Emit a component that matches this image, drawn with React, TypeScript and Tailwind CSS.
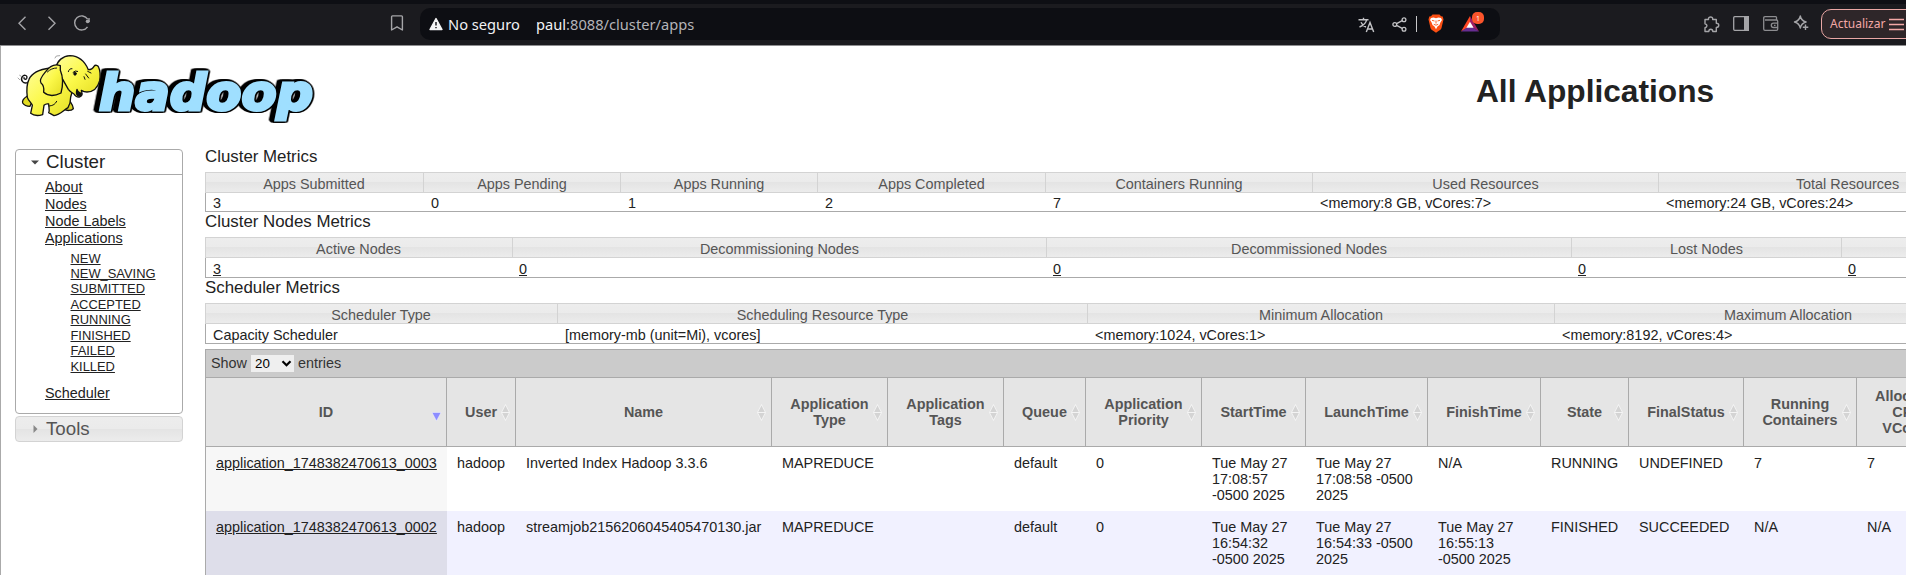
import React from "react";

type Cell = { head: string; value: string; w: string; link?: boolean };

const clusterMetrics: Cell[] = [
  { head: "Apps Submitted", value: "3", w: "w-[219px]" },
  { head: "Apps Pending", value: "0", w: "w-[197px]" },
  { head: "Apps Running", value: "1", w: "w-[197px]" },
  { head: "Apps Completed", value: "2", w: "w-[228px]" },
  { head: "Containers Running", value: "7", w: "w-[267px]" },
  { head: "Used Resources", value: "<memory:8 GB, vCores:7>", w: "w-[346px]" },
  { head: "Total Resources", value: "<memory:24 GB, vCores:24>", w: "w-[378px]" },
];

const nodeMetrics: Cell[] = [
  { head: "Active Nodes", value: "3", w: "w-[308px]", link: true },
  { head: "Decommissioning Nodes", value: "0", w: "w-[534px]", link: true },
  { head: "Decommissioned Nodes", value: "0", w: "w-[525px]", link: true },
  { head: "Lost Nodes", value: "0", w: "w-[270px]", link: true },
  { head: "", value: "0", w: "w-[258px]", link: true },
];

const schedulerMetrics: Cell[] = [
  { head: "Scheduler Type", value: "Capacity Scheduler", w: "w-[353px]" },
  { head: "Scheduling Resource Type", value: "[memory-mb (unit=Mi), vcores]", w: "w-[530px]" },
  { head: "Minimum Allocation", value: "<memory:1024, vCores:1>", w: "w-[467px]" },
  { head: "Maximum Allocation", value: "<memory:8192, vCores:4>", w: "w-[467px]" },
];

const columns: { lines: string[]; w: string }[] = [
  { lines: ["ID"], w: "w-[241px]" },
  { lines: ["User"], w: "w-[69px]" },
  { lines: ["Name"], w: "w-[256px]" },
  { lines: ["Application", "Type"], w: "w-[116px]" },
  { lines: ["Application", "Tags"], w: "w-[116px]" },
  { lines: ["Queue"], w: "w-[82px]" },
  { lines: ["Application", "Priority"], w: "w-[116px]" },
  { lines: ["StartTime"], w: "w-[104px]" },
  { lines: ["LaunchTime"], w: "w-[122px]" },
  { lines: ["FinishTime"], w: "w-[113px]" },
  { lines: ["State"], w: "w-[88px]" },
  { lines: ["FinalStatus"], w: "w-[115px]" },
  { lines: ["Running", "Containers"], w: "w-[113px]" },
  { lines: ["Allocated", "CPU", "VCores"], w: "w-[102px]" },
];

const apps: string[][][] = [
  [
    ["application_1748382470613_0003"],
    ["hadoop"],
    ["Inverted Index Hadoop 3.3.6"],
    ["MAPREDUCE"],
    [],
    ["default"],
    ["0"],
    ["Tue May 27", "17:08:57", "-0500 2025"],
    ["Tue May 27", "17:08:58 -0500", "2025"],
    ["N/A"],
    ["RUNNING"],
    ["UNDEFINED"],
    ["7"],
    ["7"],
  ],
  [
    ["application_1748382470613_0002"],
    ["hadoop"],
    ["streamjob2156206045405470130.jar"],
    ["MAPREDUCE"],
    [],
    ["default"],
    ["0"],
    ["Tue May 27", "16:54:32", "-0500 2025"],
    ["Tue May 27", "16:54:33 -0500", "2025"],
    ["Tue May 27", "16:55:13", "-0500 2025"],
    ["FINISHED"],
    ["SUCCEEDED"],
    ["N/A"],
    ["N/A"],
  ],
];

const states = ["NEW", "NEW_SAVING", "SUBMITTED", "ACCEPTED", "RUNNING", "FINISHED", "FAILED", "KILLED"];

function Toolbar() {
  return (
    <header className="flex h-[46px] shrink-0 items-start overflow-hidden border-t-4 border-b border-t-[#0e0f14] border-b-[#8e8e90] bg-[#1b1b1f] font-['Noto_Sans',sans-serif] [&>*]:shrink-0">
      <svg className="mt-3 ml-[17px] h-[15px] w-[10px]" viewBox="0 0 10 15" fill="none" stroke="#a5a5a8" strokeWidth="1.4">
        <path d="M8.5 .7 2 7.2l6.500 6.500" />
      </svg>
      <svg className="mt-3 ml-[20px] h-[15px] w-[10px]" viewBox="0 0 10 15" fill="none" stroke="#a5a5a8" strokeWidth="1.4">
        <path d="M1.500 .7 8 7.2l-6.500 6.500" />
      </svg>
      <svg className="mt-[10px] ml-[16px] h-[18px] w-[18px]" viewBox="0 0 18 18" fill="none" stroke="#a5a5a8" strokeWidth="1.4">
        <path d="M14.500 12.800A7 7 0 1 1 14.600 5.200" />
        <circle cx="14.700" cy="7.300" r="1.900" fill="#a5a5a8" stroke="none" />
        <path d="M16 4v4" />
      </svg>
      <svg className="mt-[11px] ml-[299px] h-[17px] w-[14px]" viewBox="0 0 14 17" fill="none" stroke="#a5a5a8" strokeWidth="1.4">
        <path d="M2.500 .9h9q.9 0 .9.900v13.200L7 11.800 1.600 15V1.800q0-.9.9-.9z" strokeLinejoin="round" />
      </svg>
      <div className="mt-1 ml-[16px] flex h-8 w-[1080px] items-start rounded-[10px] bg-[#0d0e13]">
        <svg className="mt-[9px] ml-[9px] h-[14px] w-[14px]" viewBox="0 0 14 14">
          <path d="M7 1.500 13 12.500H1z" fill="#f4f4f5" stroke="#f4f4f5" strokeWidth="1.400" strokeLinejoin="round" />
          <path d="M7 5v3.600M7 9.900v1.400" stroke="#0d0e13" strokeWidth="1.400" />
        </svg>
        <span className="ml-[5px] w-[88px] text-[14.670px] leading-8 whitespace-nowrap text-[#f2f2f4]">No seguro</span>
        <span className="text-[14.670px] leading-8 whitespace-nowrap text-[#b4b4b8]">
          <span className="text-[#f2f2f4]">paul</span>:8088/cluster/apps
        </span>
        <div className="ml-auto flex items-start pr-[15px]">
          <svg className="mt-[9px] h-[16px] w-[17px]" viewBox="0 0 17 16" fill="none" stroke="#c3c3c6" strokeWidth="1.400">
            <path d="M.5 2.700h10M5.500.7v2M8.600 2.900C8 6 4.500 8.800 1.500 10M3 5.200C4 7.500 6 9.300 8 10M8.300 15l3.700-9.500L15.700 15M9.500 12h5" />
          </svg>
          <svg className="mt-[9px] ml-[17px] h-[15px] w-[15px]" viewBox="0 0 15 15" fill="none" stroke="#c3c3c6" strokeWidth="1.300">
            <circle cx="2.800" cy="7.500" r="1.900" />
            <circle cx="12" cy="2.800" r="1.900" />
            <circle cx="12" cy="12.200" r="1.900" />
            <path d="m4.600 6.600 5.600-2.900M4.600 8.400l5.600 2.900" />
          </svg>
          <div className="mt-2 ml-[9px] h-4 w-px bg-[#c8c8ca]" />
          <svg className="mt-[6px] ml-[11px] h-[19px] w-[16px]" viewBox="0 0 16 19">
            <path d="M4.500.5h7l1.500 1.700 1.700.2.800 3-2 8.600q-.4 1.300-1.500 2.100L8 18.700l-4-2.600q-1.100-.8-1.500-2.100L.5 5.400l.8-3L3 2.200z" fill="#fb4f13" />
            <path d="m3 4 2.500-.5L8 4.200l2.500-.7L13 4l1 2-1.600 2.600-.9 2.500-2 1.300L8 15.300l-1.500-2.900-2-1.300-.9-2.500L2 6z" fill="#fff" />
            <path d="m4 6.300 2.500.7M12 6.300 9.500 7M8 6.500v3M5.800 10.300 8 11.200l2.200-.9" stroke="#fb4f13" strokeWidth=".9" fill="none" />
          </svg>
          <div className="relative mt-1 ml-[17px] h-6 w-[24px]">
            <svg className="mt-[4px] h-[16px] w-[18px]" viewBox="0 0 18 17" preserveAspectRatio="none">
              <path d="M9 0 0 16.500l9-5.500z" fill="#ff4724" />
              <path d="M9 0l9 16.500L9 11z" fill="#9e1f63" />
              <path d="M0 16.500h18L9 10z" fill="#662d91" />
              <path d="m9 6 3.600 6.500H5.400z" fill="#fff" />
            </svg>
            <span className="absolute top-0 left-[11px] flex h-[12px] w-[12px] items-center justify-center rounded-[5px] bg-[#fb542b] text-[7px] leading-none text-white">
              1
            </span>
          </div>
        </div>
      </div>
      <svg className="mt-[12px] ml-[203px] h-[17px] w-[17px]" viewBox="0 0 17 17" fill="none" stroke="#a5a5a8" strokeWidth="1.400" strokeLinejoin="round">
        <path d="M2 3.500h3.500c-.5-3.400 4.700-3.400 4.200 0h3.600v3.700c3.300 0 3.300 4.300 0 4.300V15.500H9.800c0-3-4-3-4 0H2v-3.700c2.600-.3 2.600-3.600 0-4z" />
      </svg>
      <svg className="mt-[12px] ml-[13px] h-[15px] w-[16px]" viewBox="0 0 16 15">
        <rect x=".7" y=".7" width="14.600" height="13.600" rx="1" fill="none" stroke="#a5a5a8" strokeWidth="1.300" />
        <path d="M11 0h5v15h-5z" fill="#a5a5a8" />
      </svg>
      <svg className="mt-[12px] ml-[14px] h-[15px] w-[16px]" viewBox="0 0 16 15" fill="none" stroke="#8d8d90" strokeWidth="1.300">
        <path d="M13.500 4V1.500q0-.8-.8-.8H2q-1.300 0-1.300 1.300v11q0 1.300 1.300 1.300h11.500q1.200 0 1.200-1.200V5.200q0-1.200-1.200-1.200H2M14.700 11.500H10.500q-2.200 0-2.200-2.200t2.200-2.200h4.200M11 9.300h1.500" />
      </svg>
      <svg className="mt-[11px] ml-[14px] h-[17px] w-[17px]" viewBox="0 0 17 17" fill="none" stroke="#a5a5a8" strokeWidth="1.400" strokeLinejoin="round">
        <path d="M7.300 1q1 4.800 5.800 6Q8.300 8.200 7.300 13 6.300 8.200 1.500 7 6.300 5.800 7.300 1zM12.500 9.500v5.500M9.800 12.300h5.500" />
      </svg>
      <div className="mt-[5px] ml-[11px] flex h-[30px] w-[100px] shrink-0 items-center rounded-l-[10px] border border-[#eaa7a5] bg-[#2e2629]">
        <span className="ml-[8px] w-[59px] text-[12px] leading-none whitespace-nowrap text-[#f3a8a6]">Actualizar</span>
        <svg className="h-[13px] w-[15px] shrink-0" viewBox="0 0 15 13" stroke="#f3a8a6" strokeWidth="1.300">
          <path d="M0 1.500h15M0 6.500h15M0 11.500h15" />
        </svg>
      </div>
    </header>
  );
}

function HadoopLogo() {
  return (
    <svg className="h-[76px] w-[304px]" viewBox="48 156 912 228">
      <defs>
        <linearGradient id="skin" x1="0" y1="0" x2="1" y2="1">
          <stop offset="0" stopColor="#fffe9a" />
          <stop offset=".5" stopColor="#fbf849" />
          <stop offset="1" stopColor="#e3dc22" />
        </linearGradient>
      </defs>
      <text
        x="297"
        y="331"
        textLength="642"
        lengthAdjust="spacingAndGlyphs"
        className="fill-[#9fdfff] stroke-[#9fdfff] [stroke-width:9px] [stroke-linejoin:miter] [filter:drop-shadow(3px_3px_0_#000)_drop-shadow(-3px_-3px_0_#000)_drop-shadow(2px_-2px_0_#000)_drop-shadow(-6px_0_0_#000)_drop-shadow(-7px_0_0_#000)] font-['DejaVu_Sans',sans-serif] text-[147px] font-bold italic"
      >
        hadoop
      </text>
      <g stroke="#111" strokeWidth="4" strokeLinejoin="round" strokeLinecap="round">
        <path d="M84 247C70 254 60 240 67 230c6-8 17-3 13 5-3 5-9 2-8-2" fill="none" />
        <path d="M82 288c-8 5-16 14-14 21 5 8 14 10 22 10l8-18z" fill="#e3dc22" />
        <path d="M205 296c6 10 14 18 15 30-7 7-20 7-28 1z" fill="#d8d020" />
        <path d="M150 204c-30 4-54 14-63 34-9 18-7 38-5 54 3 10 12 16 15 24l-5 24c10 8 26 7 36 4l4-28c4-4 10-5 14-4 0 10 4 20 0 26l16 9c18-2 28-16 42-24 6-10 8-20 8-32l10-34-40-50z" fill="url(#skin)" />
        <path d="M168 202c4-20 20-34 42-35 26 1 44 16 55 42 8 0 14-4 17-10 4-6 12-3 14 3 6 14 5 28 3 40-6 22-20 34-38 34-6 0-12-2-17-5 2 10 6 16-6 20-8 1-12-2-16-9-6-3-12-7-17-14z" fill="url(#skin)" />
        <path d="M231 268c2 8 6 10 14 12-2 6-4 9-10 8-6-3-7-10-4-20z" fill="#111" />
        <path d="M181 197c-18-7-34 4-44 18-12 14-20 26-14 34 8 6 10 14 8 28 16 14 34 11 52 2 6-22 8-44-2-68z" fill="url(#skin)" />
        <path d="M142 216c8-8 18-12 28-12M205 215c2-7 6-10 11-9M219 217q7-7 14-3M257 222l9 12M263 214l10 5M252 230l3 8M148 318c12-1 18-6 22-14" fill="none" strokeWidth="3" />
        <ellipse cx="225" cy="221" rx="4" ry="5" fill="#111" strokeWidth="2" />
        <path d="M54 234l5 5M59 226l5 3M165 174l4-6 10-1" fill="none" stroke="#777" strokeWidth="2" />
      </g>
    </svg>
  );
}

function Sidebar() {
  return (
    <nav className="flex w-[168px] shrink-0 flex-col">
      <section className="h-[265px] rounded-[4px] border border-[#aaaaaa]">
        <h3 className="flex h-[25px] items-center border-b border-[#aaaaaa] text-[18.720px] leading-6">
          <svg className="ml-[15px] h-[5px] w-[8px]" viewBox="0 0 8 5"><path d="M0 .5h8L4 4.500z" fill="#454545" /></svg>
          <span className="ml-[7px]">Cluster</span>
        </h3>
        <ul className="pt-[4px] pl-[29px] leading-[17px] underline">
          <li>About</li>
          <li>Nodes</li>
          <li>Node Labels</li>
          <li>Applications</li>
        </ul>
        <ul className="pt-[3.600px] pl-[54.500px] text-[12.900px] leading-[15.440px] underline">
          {states.map((s) => (
            <li key={s}>{s}</li>
          ))}
        </ul>
        <div className="pt-[11px] pl-[29px] leading-[17px] underline">Scheduler</div>
      </section>
      <h3 className="mt-[2px] flex h-[26px] items-center rounded-[4px] border border-[#d3d3d3] bg-[linear-gradient(#ededed,#ebebeb_50%,#e4e4e4_50%,#ececec)] text-[18.720px] leading-6 text-[#555555]">
        <svg className="ml-[17px] h-[8px] w-[5px]" viewBox="0 0 5 8"><path d="M.5 0v8l4-4z" fill="#888888" /></svg>
        <span className="ml-[8px]">Tools</span>
      </h3>
    </nav>
  );
}

function MetricsTable({ title, cells, row }: { title: string; cells: Cell[]; row: string }) {
  return (
    <section className="flex shrink-0 flex-col">
      <h3 className="h-[25px] text-[16.850px] leading-5">{title}</h3>
      <div className="flex h-[21px] border-y border-l border-[#d3d3d3] bg-[linear-gradient(#ededed,#ebebeb_50%,#e4e4e4_50%,#ececec)] text-[#555555]">
        {cells.map((c, i) => (
          <div key={i} className={`${c.w} h-[19px] shrink-0 border-r border-[#d3d3d3] text-center leading-[22px] whitespace-nowrap first:-ml-px`}>
            {c.head}
          </div>
        ))}
      </div>
      <div className={`${row} flex items-start border-b border-l border-[#aaaaaa]`}>
        {cells.map((c, i) => (
          <div key={i} className={`${c.w} shrink-0 ${c.link ? "pl-[6px]" : "pl-[7px]"} leading-[17px] whitespace-nowrap first:-ml-px first:pl-2`}>
            <span className={c.link ? "underline" : ""}>{c.value}</span>
          </div>
        ))}
      </div>
    </section>
  );
}

function SortIcon({ active }: { active: boolean }) {
  return (
    <svg className="absolute top-1/2 right-0 -mt-[9px] h-[19px] w-[19px]" viewBox="0 0 19 19">
      {active ? (
        <path d="M5 9.500h9L9.500 18z" fill="#8d8dff" stroke="#f4f4ff" strokeWidth=".5" />
      ) : (
        <g>
          <path d="M5 9.500 9.500.8 14 9.500 9.500 18.200z" fill="#f4f4f4" />
          <path d="M6.200 9 9.500 2.500 12.800 9zM6.200 10h6.600L9.500 16.500z" fill="#d4d4d4" />
        </g>
      )}
    </svg>
  );
}

function AppsTable() {
  return (
    <section className="mt-[5px] flex h-[226px] shrink-0 flex-col border-t border-l border-[#aaaaaa]">
      <div className="flex h-[27px] items-start bg-[#cbcbcb] pl-[5px] text-[#333333]">
        <span className="w-[40px] leading-[27px]">Show</span>
        <div className="mt-[5px] flex h-[17px] w-[43px] items-center bg-[#efefef] text-[13.330px] leading-none text-black">
          <span className="ml-[4px]">20</span>
          <svg className="ml-[11px] h-[7px] w-[11px]" viewBox="0 0 11 7">
            <path d="m1.500 1.200 4 4 4-4" fill="none" stroke="#000" strokeWidth="2.200" />
          </svg>
        </div>
        <span className="ml-[4px] leading-[27px]">entries</span>
      </div>
      <div className="flex h-[70px] border-y border-[#aaaaaa] bg-[#e5e5e5] font-bold text-[#555555]">
        {columns.map((c, i) => (
          <div key={i} className={`${c.w} relative flex shrink-0 flex-col items-center justify-center border-r border-[#aaaaaa] leading-4`}>
            {c.lines.map((l) => (
              <span key={l}>{l}</span>
            ))}
            <SortIcon active={i === 0} />
          </div>
        ))}
      </div>
      {apps.map((row, r) => (
        <div key={r} className={`flex h-16 ${r === 1 ? "bg-[#f1f1ff]" : "bg-white"}`}>
          {row.map((lines, i) => (
            <div
              key={i}
              className={`${columns[i].w} flex shrink-0 flex-col pt-2 pl-[10px] leading-4 whitespace-nowrap ${
                i === 0 ? (r === 1 ? "bg-[#dedeea] underline" : "bg-[#f7f7f7] underline") : ""
              }`}
            >
              {lines.map((l) => (
                <span key={l}>{l}</span>
              ))}
            </div>
          ))}
        </div>
      ))}
    </section>
  );
}

export default function App() {
  return (
    <div className="flex h-[575px] w-[1906px] flex-col overflow-hidden bg-white font-['Liberation_Sans',Arial,sans-serif] text-[14.400px] text-[#222222]">
      <Toolbar />
      <div className="flex flex-1 flex-col overflow-hidden border-l border-[#aaaaaa]">
        <div className="flex h-[103px] shrink-0 items-start pt-[6px] pl-[15px]">
          <HadoopLogo />
          <h1 className="mt-[19px] ml-[1156px] text-[31.680px] leading-[40px] font-bold whitespace-nowrap">All Applications</h1>
        </div>
        <div className="flex pl-[14px]">
          <Sidebar />
          <main className="-mt-[2px] ml-[22px] flex min-w-0 flex-1 flex-col overflow-hidden">
            <MetricsTable title="Cluster Metrics" cells={clusterMetrics} row="h-[19px] pt-[2px]" />
            <MetricsTable title="Cluster Nodes Metrics" cells={nodeMetrics} row="h-[20px] pt-[3px]" />
            <MetricsTable title="Scheduler Metrics" cells={schedulerMetrics} row="h-[20px] pt-[3px]" />
            <AppsTable />
          </main>
        </div>
      </div>
    </div>
  );
}
